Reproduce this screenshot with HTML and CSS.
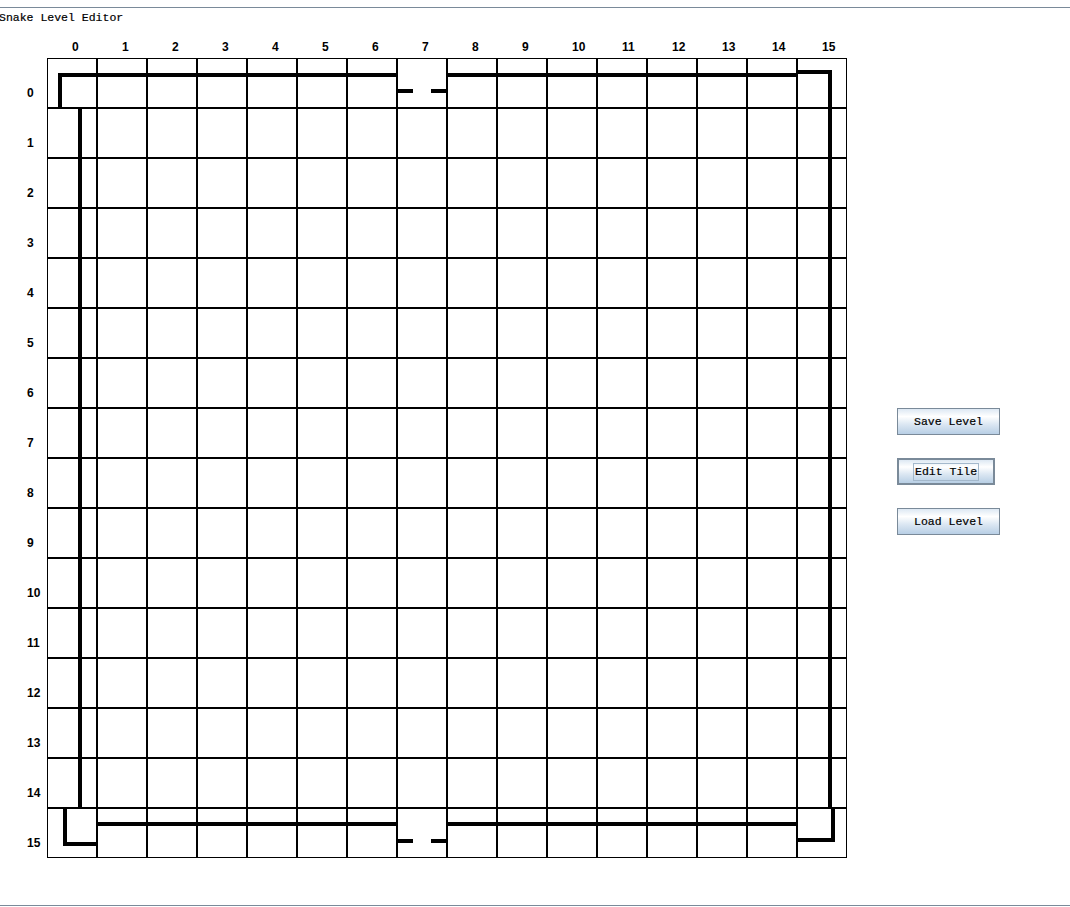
FILE: index.html
```html
<!DOCTYPE html>
<html>
<head>
<meta charset="utf-8">
<title>Snake Level Editor</title>
<link rel="stylesheet" href="styles.css">
</head>
<body>
<div class="frame">
  <div class="title">Snake Level Editor</div>
  <div class="main">
    <div class="board">
      <div class="corner"></div>
      <div class="cl">0</div><div class="cl">1</div><div class="cl">2</div><div class="cl">3</div><div class="cl">4</div><div class="cl">5</div><div class="cl">6</div><div class="cl">7</div><div class="cl">8</div><div class="cl">9</div><div class="cl">10</div><div class="cl">11</div><div class="cl">12</div><div class="cl">13</div><div class="cl">14</div><div class="cl">15</div>

      <div class="rl">0</div>
      <div class="t tl"></div><div class="t h"></div><div class="t h"></div><div class="t h"></div><div class="t h"></div><div class="t h"></div><div class="t h"></div><div class="t door"></div><div class="t h"></div><div class="t h"></div><div class="t h"></div><div class="t h"></div><div class="t h"></div><div class="t h"></div><div class="t h"></div><div class="t tr"></div>

      <div class="rl">1</div>
      <div class="t v"></div><div class="t"></div><div class="t"></div><div class="t"></div><div class="t"></div><div class="t"></div><div class="t"></div><div class="t"></div><div class="t"></div><div class="t"></div><div class="t"></div><div class="t"></div><div class="t"></div><div class="t"></div><div class="t"></div><div class="t v"></div>

      <div class="rl">2</div>
      <div class="t v"></div><div class="t"></div><div class="t"></div><div class="t"></div><div class="t"></div><div class="t"></div><div class="t"></div><div class="t"></div><div class="t"></div><div class="t"></div><div class="t"></div><div class="t"></div><div class="t"></div><div class="t"></div><div class="t"></div><div class="t v"></div>

      <div class="rl">3</div>
      <div class="t v"></div><div class="t"></div><div class="t"></div><div class="t"></div><div class="t"></div><div class="t"></div><div class="t"></div><div class="t"></div><div class="t"></div><div class="t"></div><div class="t"></div><div class="t"></div><div class="t"></div><div class="t"></div><div class="t"></div><div class="t v"></div>

      <div class="rl">4</div>
      <div class="t v"></div><div class="t"></div><div class="t"></div><div class="t"></div><div class="t"></div><div class="t"></div><div class="t"></div><div class="t"></div><div class="t"></div><div class="t"></div><div class="t"></div><div class="t"></div><div class="t"></div><div class="t"></div><div class="t"></div><div class="t v"></div>

      <div class="rl">5</div>
      <div class="t v"></div><div class="t"></div><div class="t"></div><div class="t"></div><div class="t"></div><div class="t"></div><div class="t"></div><div class="t"></div><div class="t"></div><div class="t"></div><div class="t"></div><div class="t"></div><div class="t"></div><div class="t"></div><div class="t"></div><div class="t v"></div>

      <div class="rl">6</div>
      <div class="t v"></div><div class="t"></div><div class="t"></div><div class="t"></div><div class="t"></div><div class="t"></div><div class="t"></div><div class="t"></div><div class="t"></div><div class="t"></div><div class="t"></div><div class="t"></div><div class="t"></div><div class="t"></div><div class="t"></div><div class="t v"></div>

      <div class="rl">7</div>
      <div class="t v"></div><div class="t"></div><div class="t"></div><div class="t"></div><div class="t"></div><div class="t"></div><div class="t"></div><div class="t"></div><div class="t"></div><div class="t"></div><div class="t"></div><div class="t"></div><div class="t"></div><div class="t"></div><div class="t"></div><div class="t v"></div>

      <div class="rl">8</div>
      <div class="t v"></div><div class="t"></div><div class="t"></div><div class="t"></div><div class="t"></div><div class="t"></div><div class="t"></div><div class="t"></div><div class="t"></div><div class="t"></div><div class="t"></div><div class="t"></div><div class="t"></div><div class="t"></div><div class="t"></div><div class="t v"></div>

      <div class="rl">9</div>
      <div class="t v"></div><div class="t"></div><div class="t"></div><div class="t"></div><div class="t"></div><div class="t"></div><div class="t"></div><div class="t"></div><div class="t"></div><div class="t"></div><div class="t"></div><div class="t"></div><div class="t"></div><div class="t"></div><div class="t"></div><div class="t v"></div>

      <div class="rl">10</div>
      <div class="t v"></div><div class="t"></div><div class="t"></div><div class="t"></div><div class="t"></div><div class="t"></div><div class="t"></div><div class="t"></div><div class="t"></div><div class="t"></div><div class="t"></div><div class="t"></div><div class="t"></div><div class="t"></div><div class="t"></div><div class="t v"></div>

      <div class="rl">11</div>
      <div class="t v"></div><div class="t"></div><div class="t"></div><div class="t"></div><div class="t"></div><div class="t"></div><div class="t"></div><div class="t"></div><div class="t"></div><div class="t"></div><div class="t"></div><div class="t"></div><div class="t"></div><div class="t"></div><div class="t"></div><div class="t v"></div>

      <div class="rl">12</div>
      <div class="t v"></div><div class="t"></div><div class="t"></div><div class="t"></div><div class="t"></div><div class="t"></div><div class="t"></div><div class="t"></div><div class="t"></div><div class="t"></div><div class="t"></div><div class="t"></div><div class="t"></div><div class="t"></div><div class="t"></div><div class="t v"></div>

      <div class="rl">13</div>
      <div class="t v"></div><div class="t"></div><div class="t"></div><div class="t"></div><div class="t"></div><div class="t"></div><div class="t"></div><div class="t"></div><div class="t"></div><div class="t"></div><div class="t"></div><div class="t"></div><div class="t"></div><div class="t"></div><div class="t"></div><div class="t v"></div>

      <div class="rl">14</div>
      <div class="t v"></div><div class="t"></div><div class="t"></div><div class="t"></div><div class="t"></div><div class="t"></div><div class="t"></div><div class="t"></div><div class="t"></div><div class="t"></div><div class="t"></div><div class="t"></div><div class="t"></div><div class="t"></div><div class="t"></div><div class="t v"></div>

      <div class="rl">15</div>
      <div class="t bl"></div><div class="t hb"></div><div class="t hb"></div><div class="t hb"></div><div class="t hb"></div><div class="t hb"></div><div class="t hb"></div><div class="t door"></div><div class="t hb"></div><div class="t hb"></div><div class="t hb"></div><div class="t hb"></div><div class="t hb"></div><div class="t hb"></div><div class="t hb"></div><div class="t br"></div>
    </div>

    <div class="controls">
      <button class="btn">Save Level</button>
      <button class="btn focused"><span class="focus">Edit Tile</span></button>
      <button class="btn">Load Level</button>
    </div>
  </div>
</div>
</body>
</html>
```

FILE: styles.css
```css
html, body {
  margin: 0;
  padding: 0;
  background: #ffffff;
  overflow: hidden;
}

.frame {
  margin-top: 7px;
  height: 899px;
  box-sizing: border-box;
  border-top: 1px solid #7a8a99;
  border-bottom: 1px solid #7a8a99;
}

.title {
  height: 20px;
  line-height: 19px;
  margin-left: -1px;
  font-family: "Liberation Mono", "Courier New", monospace;
  font-size: 11.5px;
  color: #000;
  white-space: nowrap;
  -webkit-text-stroke: 0.2px #000;
}

.main {
  display: flex;
  align-items: flex-start;
}

.board {
  display: grid;
  grid-template-columns: 47px repeat(16, 50px);
  grid-template-rows: 30px repeat(16, 50px);
}

.cl, .rl {
  font-family: "Liberation Sans", Arial, sans-serif;
  font-weight: bold;
  font-size: 12px;
  line-height: 12px;
  color: #000;
  white-space: nowrap;
}

.cl {
  padding-top: 13px;
  padding-left: 25px;
}

.rl {
  padding-top: 29px;
  padding-left: 27px;
}

.t {
  box-sizing: border-box;
  width: 50px;
  height: 50px;
  border: 1px solid #000;
  background-color: #fff;
  background-origin: border-box;
  background-repeat: no-repeat;
}

/* wall sprites */
.v {
  background-image: linear-gradient(#000, #000);
  background-size: 4px 50px;
  background-position: 31px 0;
}

.h {
  background-image: linear-gradient(#000, #000);
  background-size: 50px 4px;
  background-position: 0 15px;
}

.hb {
  background-image: linear-gradient(#000, #000);
  background-size: 50px 4px;
  background-position: 0 14px;
}

.door {
  background-image: linear-gradient(#000, #000), linear-gradient(#000, #000);
  background-size: 16px 4px, 16px 4px;
  background-position: 0 31px, 34px 31px;
}

.tl {
  background-image: linear-gradient(#000, #000), linear-gradient(#000, #000);
  background-size: 39px 4px, 4px 35px;
  background-position: 11px 15px, 11px 15px;
}

.tr {
  background-image: linear-gradient(#000, #000), linear-gradient(#000, #000);
  background-size: 35px 4px, 4px 38px;
  background-position: 0 12px, 31px 12px;
}

.bl {
  background-image: linear-gradient(#000, #000), linear-gradient(#000, #000);
  background-size: 4px 38px, 34px 4px;
  background-position: 16px 0, 16px 34px;
}

.br {
  background-image: linear-gradient(#000, #000), linear-gradient(#000, #000);
  background-size: 38px 4px, 4px 34px;
  background-position: 0 30px, 34px 0;
}

.controls {
  display: flex;
  flex-direction: column;
  align-items: flex-start;
  gap: 23px;
  margin-left: 50px;
  padding-top: 380px;
}

.btn {
  box-sizing: border-box;
  height: 27px;
  margin: 0;
  padding: 0 16px;
  border: 1px solid #7a8a99;
  border-radius: 0;
  background: linear-gradient(to bottom, #dde8f3 0%, #ffffff 30%, #dde8f3 60%, #b8cfe5 100%);
  font-family: "Liberation Mono", "Courier New", monospace;
  font-size: 11.5px;
  line-height: 16px;
  color: #000;
  white-space: nowrap;
  -webkit-text-stroke: 0.2px #000;
}

.btn.focused {
  border-width: 2px;
  padding: 0 14px;
}

.focus {
  display: inline-block;
  border: 1px solid #a3b8cc;
  padding: 0 1px;
  line-height: 16px;
}
```
